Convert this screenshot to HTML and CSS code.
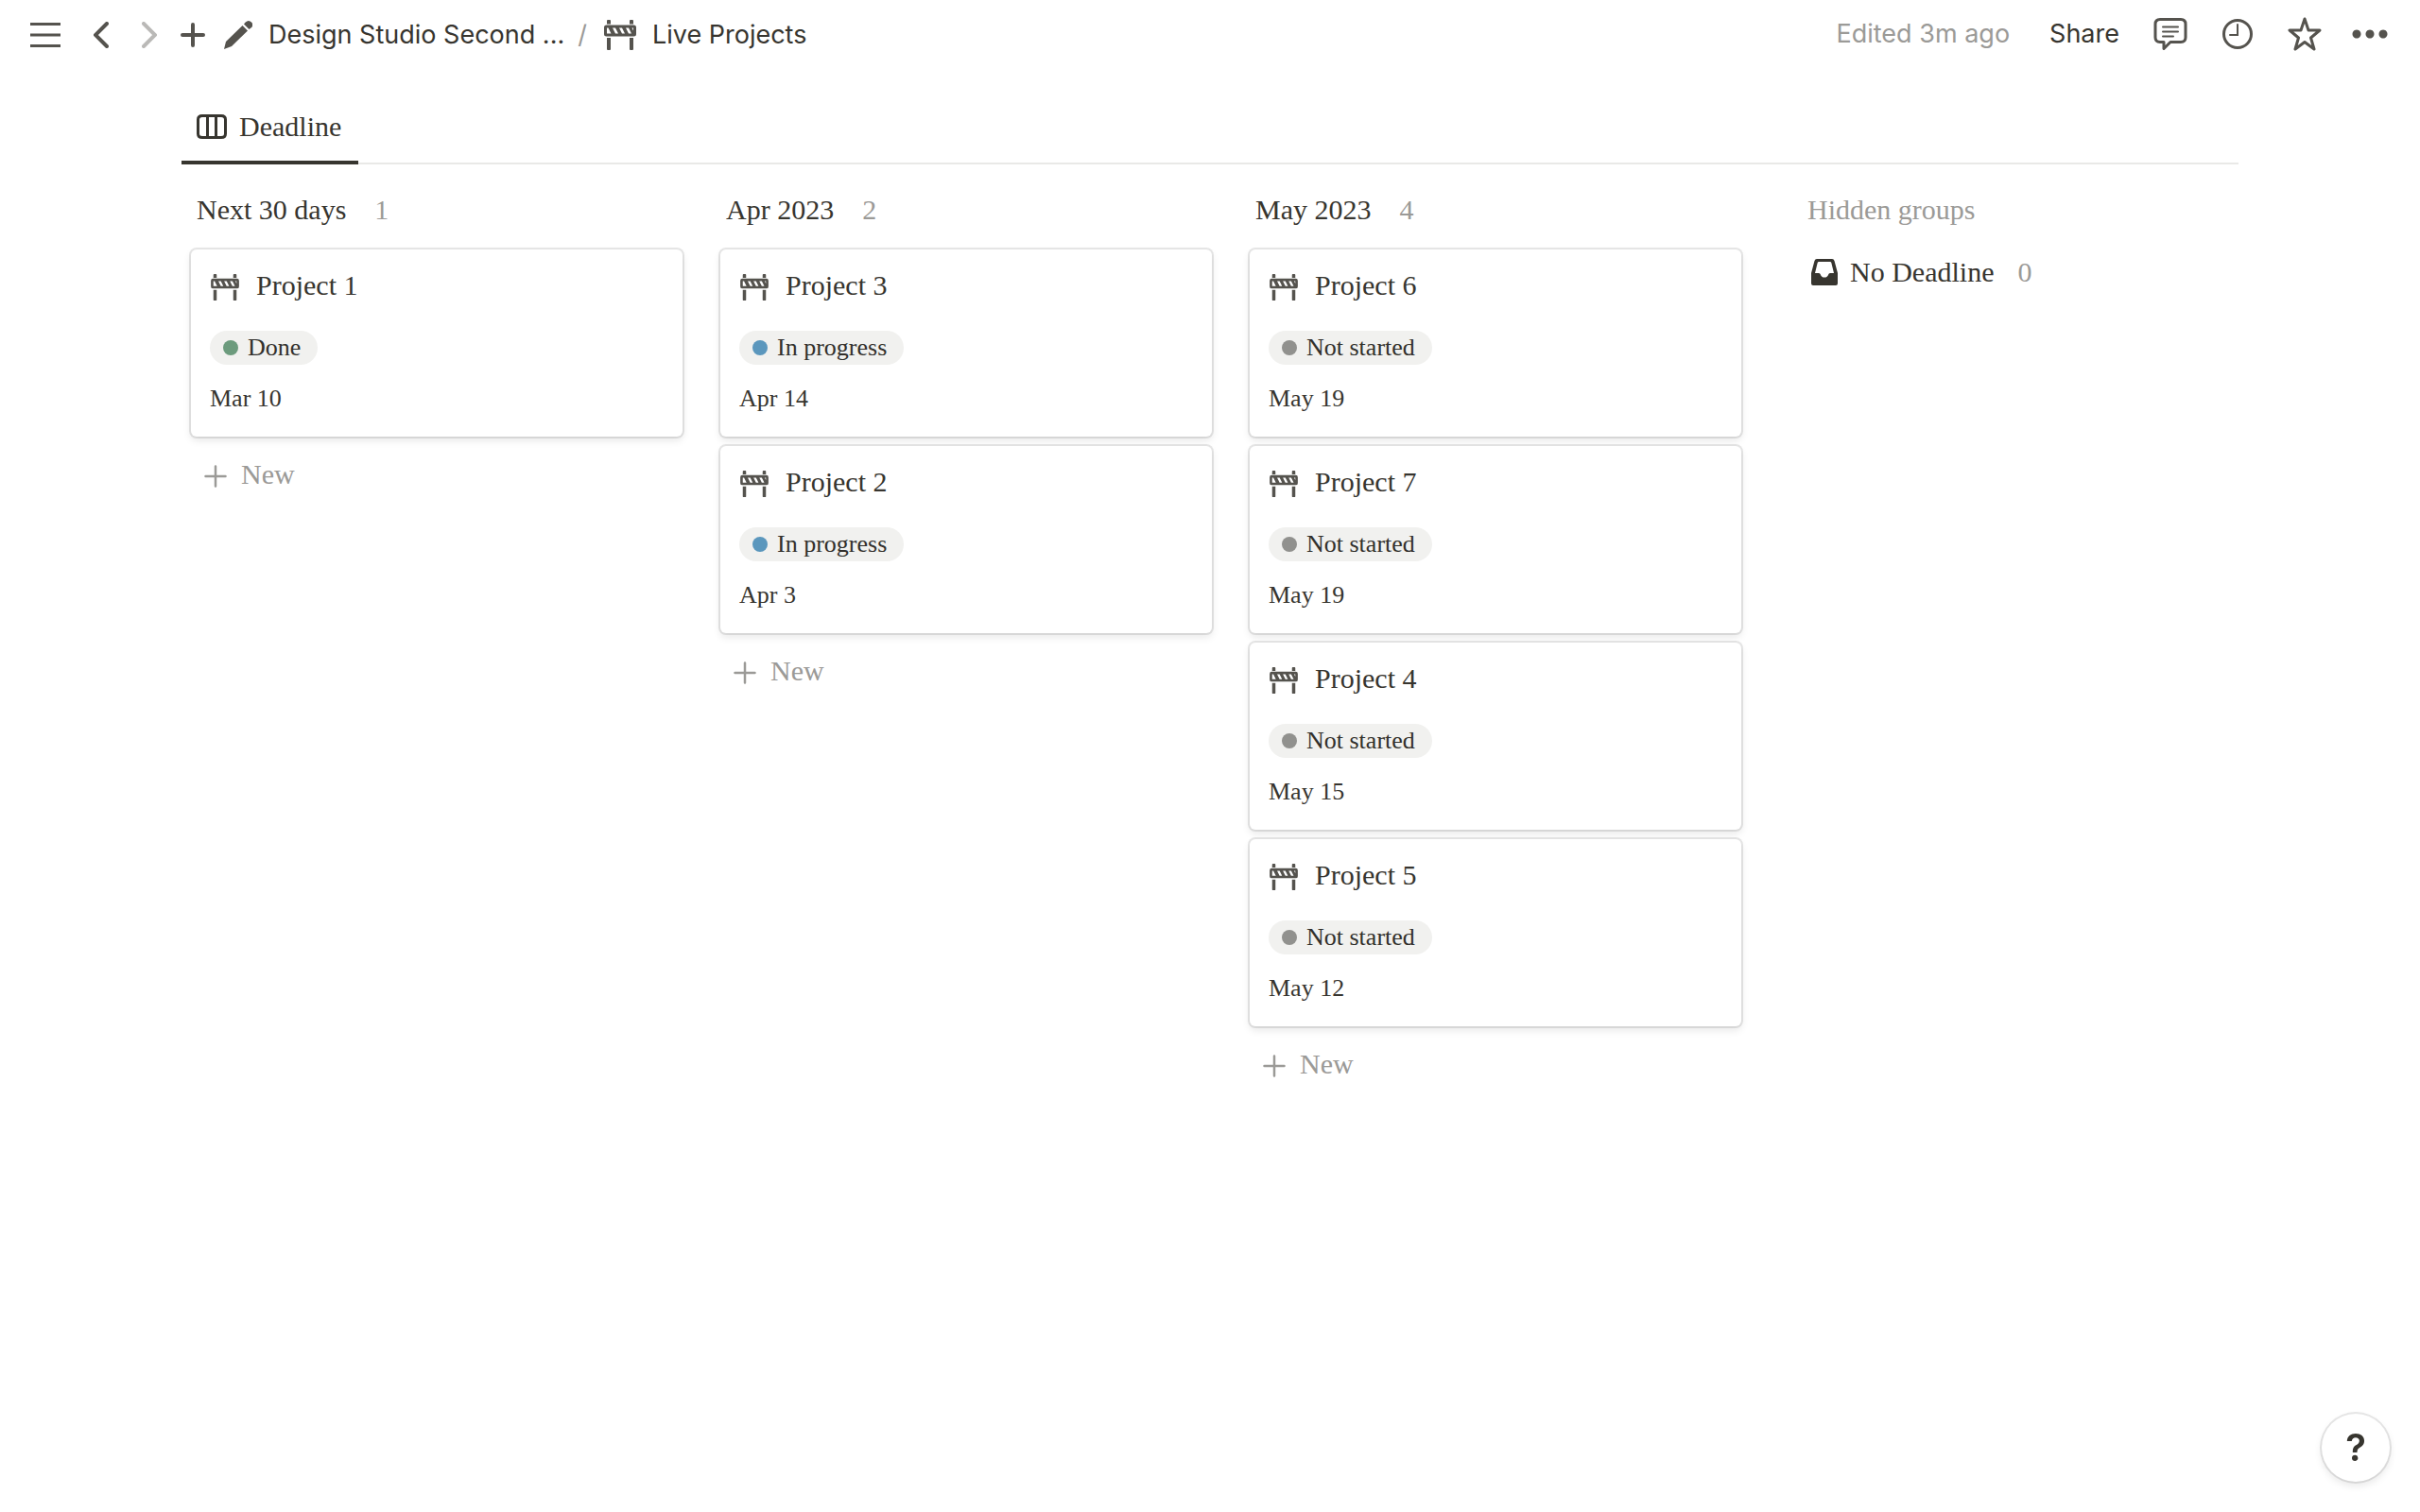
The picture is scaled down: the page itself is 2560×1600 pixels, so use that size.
FILE: index.html
```html
<!DOCTYPE html>
<html lang="en">
<head>
<meta charset="utf-8">
<title>Live Projects</title>
<link rel="stylesheet" href="styles.css">
</head>
<body>
<svg class="sprite" aria-hidden="true">
  <symbol id="barrier" viewBox="0 0 34 32">
    <path fill="currentColor" fill-rule="evenodd" d="M4 0h2q1 0 1 1v3.500H3V1q0-1 1-1zM28 0h2q1 0 1 1v3.500h-4V1q0-1 1-1zM2.500 5.500h29q2.500 0 2.500 2.500v7q0 2.500-2.500 2.500h-29Q0 17.500 0 15V8q0-2.500 2.500-2.500zM3 8.500v6h4.500L4.500 8.500zM9 8.500l3 6h3l-3-6zM16 8.500l3 6h3l-3-6zM23 8.500l3 6h3l-3-6zM29.500 8.500l1.500 3v-3zM3 19h4v12q0 1-1 1H4q-1 0-1-1zM27 19h4v12q0 1-1 1h-2q-1 0-1-1z"/>
  </symbol>
  <symbol id="plus" viewBox="0 0 24 24">
    <path fill="none" stroke="currentColor" stroke-width="2.500" stroke-linecap="round" d="M12 1.500v21M1.500 12h21"/>
  </symbol>
</svg>

<header class="topbar">
  <div class="tools">
    <button class="tool" aria-label="Open sidebar"><svg width="32" height="28" viewBox="0 0 32 28"><path class="line" d="M0 2.500h32M0 14h32M0 25.500h32"/></svg></button>
    <button class="tool" aria-label="Back"><svg width="16" height="28" viewBox="0 0 16 28"><path class="line round" d="M14 2L2 14l12 12"/></svg></button>
    <button class="tool faded" aria-label="Forward"><svg width="16" height="28" viewBox="0 0 16 28"><path class="line round" d="M2 2l12 12L2 26"/></svg></button>
    <button class="tool" aria-label="New page"><svg width="26" height="28" viewBox="0 0 26 28"><path class="line round" d="M13 3v22M2 14h22"/></svg></button>
  </div>
  <nav class="crumbs" aria-label="Breadcrumb">
    <a class="crumb" href="#"><svg width="30" height="30" viewBox="0 0 30 30"><path fill="currentColor" d="M0 30l2-8L19.500 5l5.500 5.500L8 27zM21 3.500l1.700-2Q26-1.500 29 1.500t-.500 6L26.500 9z"/></svg>Design Studio Second ...</a>
    <span class="slash">/</span>
    <a class="crumb" href="#"><svg width="34" height="32"><use href="#barrier"/></svg>Live Projects</a>
  </nav>
  <div class="actions">
    <span class="edited">Edited 3m ago</span>
    <button class="share">Share</button>
    <button class="tool" aria-label="Comments"><svg width="36" height="36" viewBox="0 0 36 36"><path class="line" stroke-linejoin="round" d="M7 2.500h22q5 0 5 5v14q0 5-5 5H18l-7 7v-7H7q-5 0-5-5v-14q0-5 5-5z"/><path class="thin" d="M10 10.500h16M10 15.500h16M10 20.500h11"/></svg></button>
    <button class="tool" aria-label="Updates"><svg width="34" height="34" viewBox="0 0 34 34"><circle class="line" cx="17" cy="17" r="14.500"/><path class="thin" d="M17 7v11H9"/></svg></button>
    <button class="tool" aria-label="Favorite"><svg width="36" height="36" viewBox="0 0 36 36"><path class="line" stroke-linejoin="round" d="M18 2l4 12h12l-9.500 8L28 34l-10-7.500L8 34l3.500-12L2 14h12z"/></svg></button>
    <button class="tool more" aria-label="More"><svg width="38" height="10" viewBox="0 0 38 10"><path fill="currentColor" d="M5 .500a4.500 4.500 0 1 0 .01 0zM19 .500a4.500 4.500 0 1 0 .01 0zM33 .500a4.500 4.500 0 1 0 .01 0z"/></svg></button>
  </div>
</header>

<main class="page">
  <div class="tabs">
    <button class="tab"><svg width="32" height="26" viewBox="0 0 32 26"><path fill="none" stroke="currentColor" stroke-width="3" d="M6 1.500h20q4.500 0 4.500 4v15q0 4-4.500 4H6q-4.500 0-4.500-4v-15q0-4 4.500-4zM11.500 2v22M20.500 2v22"/></svg>Deadline</button>
  </div>
  <div class="board">
    <section class="column">
      <h2 class="heading">Next 30 days <span class="count">1</span></h2>
      <div class="cards">
        <article class="card">
          <h3 class="name"><svg class="cardicon"><use href="#barrier"/></svg>Project 1</h3>
          <span class="status done">Done</span>
          <time class="date">Mar 10</time>
        </article>
      </div>
      <button class="new"><svg width="24" height="24"><use href="#plus"/></svg>New</button>
    </section>
    <section class="column">
      <h2 class="heading">Apr 2023 <span class="count">2</span></h2>
      <div class="cards">
        <article class="card">
          <h3 class="name"><svg class="cardicon"><use href="#barrier"/></svg>Project 3</h3>
          <span class="status progress">In progress</span>
          <time class="date">Apr 14</time>
        </article>
        <article class="card">
          <h3 class="name"><svg class="cardicon"><use href="#barrier"/></svg>Project 2</h3>
          <span class="status progress">In progress</span>
          <time class="date">Apr 3</time>
        </article>
      </div>
      <button class="new"><svg width="24" height="24"><use href="#plus"/></svg>New</button>
    </section>
    <section class="column">
      <h2 class="heading">May 2023 <span class="count">4</span></h2>
      <div class="cards">
        <article class="card">
          <h3 class="name"><svg class="cardicon"><use href="#barrier"/></svg>Project 6</h3>
          <span class="status">Not started</span>
          <time class="date">May 19</time>
        </article>
        <article class="card">
          <h3 class="name"><svg class="cardicon"><use href="#barrier"/></svg>Project 7</h3>
          <span class="status">Not started</span>
          <time class="date">May 19</time>
        </article>
        <article class="card">
          <h3 class="name"><svg class="cardicon"><use href="#barrier"/></svg>Project 4</h3>
          <span class="status">Not started</span>
          <time class="date">May 15</time>
        </article>
        <article class="card">
          <h3 class="name"><svg class="cardicon"><use href="#barrier"/></svg>Project 5</h3>
          <span class="status">Not started</span>
          <time class="date">May 12</time>
        </article>
      </div>
      <button class="new"><svg width="24" height="24"><use href="#plus"/></svg>New</button>
    </section>
    <section class="column hidden-groups">
      <h2 class="heading muted">Hidden groups</h2>
      <button class="group"><svg width="28" height="28" viewBox="0 0 28 28"><path fill="currentColor" fill-rule="evenodd" d="M6 0h16q2 0 2.500 2L28 15v11q0 2-2 2H2q-2 0-2-2V15L3.500 2Q4 0 6 0zM8 3q-1 0-1.300 1L4 15h4q1.500 0 1.800 1.500a4.400 4.400 0 0 0 8.400 0Q18.500 15 20 15h4L21.300 4Q21 3 20 3z"/></svg>No Deadline <span class="count">0</span></button>
    </section>
  </div>
</main>
<button class="help" aria-label="Help">?</button>
</body>
</html>
```

FILE: styles.css
```css
* { box-sizing: border-box; }

body {
  margin: 0;
  background: #fff;
  color: #37352f;
  font-family: "Liberation Serif", serif;
  font-size: 30px;
  line-height: 36px;
}

button {
  padding: 0;
  border: 0;
  background: none;
  color: inherit;
  font: inherit;
  cursor: pointer;
}

svg { display: block; flex: none; }
.sprite { position: absolute; width: 0; height: 0; }

.line { fill: none; stroke: currentColor; stroke-width: 3; }
.round { stroke-width: 4; stroke-linecap: round; }
.thin { fill: none; stroke: currentColor; stroke-width: 2; stroke-linecap: round; }

.topbar {
  display: flex;
  align-items: center;
  height: 74px;
  padding: 0 34px 0 32px;
  font-family: Inter, sans-serif;
  font-size: 27px;
}
.tools { display: flex; align-items: center; gap: 35px; }
.tool { color: #55534e; }
.tool.faded { color: #bab9b7; }
.tools .tool:last-child { margin-left: -10px; }
.crumbs { display: flex; align-items: center; margin-left: 20px; }
.crumb {
  display: flex;
  align-items: center;
  gap: 17px;
  color: inherit;
  text-decoration: none;
  white-space: nowrap;
}
.crumb svg { color: #55534e; }
.slash { margin: 0 18px 0 14px; color: #9b9a97; }
.actions {
  display: flex;
  align-items: center;
  gap: 36px;
  margin-left: auto;
  padding-bottom: 3px;
}
.edited { margin-right: 6px; color: #9b9a97; }
.more { margin-left: -4px; }

.page { padding: 28px 192px 0; }
.tabs { display: flex; border-bottom: 2px solid #e9e9e7; }
.tab {
  display: flex;
  align-items: center;
  gap: 13px;
  height: 72px;
  margin-bottom: -2px;
  padding: 0 18px 4px 16px;
  border-bottom: 4px solid #37352f;
}

.board { display: flex; gap: 40px; padding: 26px 10px 0; }
.column { flex: 0 0 520px; }
.hidden-groups { flex: 1 1 0; margin-left: 24px; }
.heading {
  display: flex;
  gap: 30px;
  margin: 0 0 24px;
  padding: 4px 6px 0;
  font-size: 30px;
  font-weight: 400;
}
.muted, .count { color: #9b9a97; }
.cards { display: flex; flex-direction: column; gap: 10px; }
.card {
  display: flex;
  flex-direction: column;
  align-items: flex-start;
  height: 198px;
  padding: 20px;
  border-radius: 6px;
  background: #fff;
  box-shadow: 0 0 0 2px rgba(15, 15, 15, 0.1), 0 4px 8px rgba(15, 15, 15, 0.1);
}
.name {
  display: flex;
  align-items: center;
  gap: 18px;
  margin: 0;
  padding-left: 1px;
  font-size: 30px;
  font-weight: 400;
}
.cardicon { width: 30px; height: 28px; margin-top: 4px; color: #55534e; }
.status {
  display: flex;
  align-items: center;
  gap: 10px;
  height: 36px;
  margin-top: 30px;
  padding: 0 18px 0 14px;
  border-radius: 18px;
  background: #f1f1ef;
  color: #32302c;
  font-size: 26px;
}
.status::before {
  content: "";
  width: 16px;
  height: 16px;
  border-radius: 50%;
  background: #91918e;
}
.status.done::before { background: #6c9b7d; }
.status.progress::before { background: #5b97bd; }
.date { margin-top: 18px; font-size: 26px; }

.new {
  display: flex;
  align-items: center;
  gap: 15px;
  margin-top: 22px;
  padding-left: 14px;
  color: #9b9a97;
}
.new svg { margin-top: 3px; }
.group {
  display: flex;
  align-items: center;
  gap: 13px;
  margin-top: 30px;
  padding-left: 10px;
}
.group .count { margin-left: 12px; }

.help {
  position: fixed;
  right: 32px;
  bottom: 32px;
  width: 72px;
  height: 72px;
  border-radius: 50%;
  background: #fff;
  box-shadow: 0 0 0 2px rgba(15, 15, 15, 0.1), 0 4px 8px rgba(15, 15, 15, 0.1);
  font: 600 40px/72px Inter, sans-serif;
}
```
